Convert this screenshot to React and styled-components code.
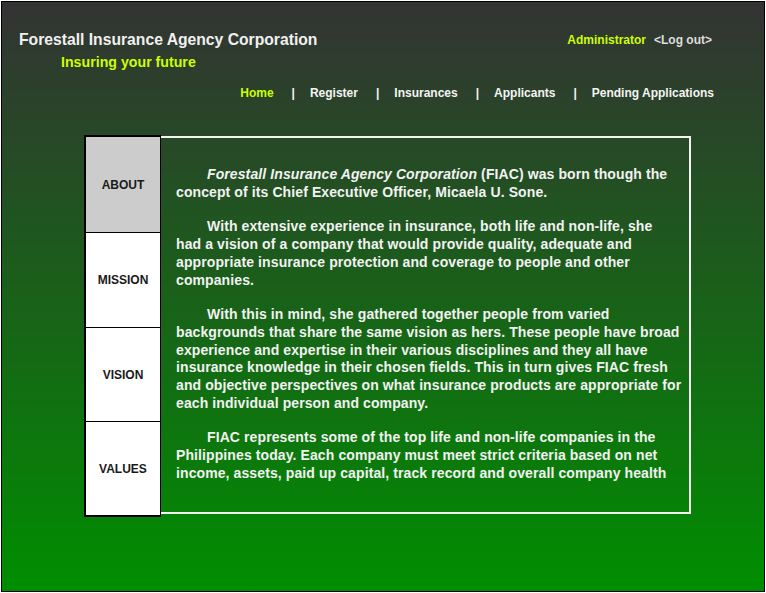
import React from "react";
import styled, { createGlobalStyle } from "styled-components";

const Global = createGlobalStyle`
  html, body { margin: 0; padding: 0; background: #fff; }
  body { font-family: "Liberation Sans", Arial, sans-serif; }
`;

const Frame = styled.div`
  margin: 1px;
  width: 762px;
  height: 589px;
  border: 1px solid #000;
  background: linear-gradient(to bottom, #333333 0%, #008e00 100%);
  display: flex;
  flex-direction: column;
  overflow: hidden;
`;

const Header = styled.div`
  display: flex;
  justify-content: space-between;
  align-items: flex-start;
  padding: 28px 52px 0 17px;
`;

const Brand = styled.div`
  display: flex;
  flex-direction: column;
`;

const Title = styled.div`
  color: #f0f0f0;
  font-size: 15.7px;
  font-weight: bold;
  line-height: 20px;
`;

const Tagline = styled.div`
  color: #ccff00;
  font-size: 14.2px;
  font-weight: bold;
  line-height: 18px;
  margin: 3px 0 0 42px;
`;

const User = styled.div`
  display: flex;
  gap: 8px;
  font-size: 12px;
  font-weight: bold;
  line-height: 16px;
  margin-top: 2px;
`;

const UserName = styled.span`
  color: #ccff00;
`;

const LogOut = styled.span`
  color: #dddddd;
`;

const Nav = styled.nav`
  display: flex;
  justify-content: flex-end;
  padding: 14px 50px 0 0;
  font-size: 12px;
  font-weight: bold;
  line-height: 16px;
`;

const NavLink = styled.span`
  color: ${(p) => (p.$active ? "#ccff00" : "#f4f4f4")};
`;

const Sep = styled.span`
  color: #f4f4f4;
  margin: 0 15px 0 18px;
`;

const Content = styled.div`
  display: flex;
  align-items: flex-start;
  margin: 34px 0 0 82px;
`;

const Tabs = styled.div`
  width: 74px;
  border: 2px solid #000;
  border-right-width: 1px;
  display: flex;
  flex-direction: column;
  flex-shrink: 0;
`;

const Tab = styled.div`
  height: ${(p) => p.$h}px;
  display: flex;
  align-items: center;
  justify-content: center;
  background: ${(p) => (p.$active ? "#cccccc" : "#ffffff")};
  color: #1a1a1a;
  font-size: 12px;
  font-weight: bold;
  border-top: ${(p) => (p.$first ? "none" : "1px solid #000")};
`;

const Panel = styled.div`
  width: 530px;
  height: 378px;
  margin-top: 1px;
  border: 2px solid #f4f4f4;
  border-left: none;
  padding: 28px 7.5px 0 15px;
  box-sizing: border-box;
`;

const Para = styled.p`
  margin: 0 0 17px;
  color: #f2f2f2;
  font-size: 14px;
  font-weight: bold;
  line-height: 17.7px;
  letter-spacing: 0.1px;
  text-indent: 31px;
`;

export default function App() {
  const tabs = [
    { label: "ABOUT", h: 95, active: true },
    { label: "MISSION", h: 94 },
    { label: "VISION", h: 93 },
    { label: "VALUES", h: 93 },
  ];
  const links = ["Home", "Register", "Insurances", "Applicants", "Pending Applications"];
  return (
    <>
      <Global />
      <Frame>
        <Header>
          <Brand>
            <Title>Forestall Insurance Agency Corporation</Title>
            <Tagline>Insuring your future</Tagline>
          </Brand>
          <User>
            <UserName>Administrator</UserName>
            <LogOut>&lt;Log out&gt;</LogOut>
          </User>
        </Header>
        <Nav>
          {links.map((l, i) => (
            <React.Fragment key={l}>
              {i > 0 && <Sep>|</Sep>}
              <NavLink $active={i === 0}>{l}</NavLink>
            </React.Fragment>
          ))}
        </Nav>
        <Content>
          <Tabs>
            {tabs.map((t, i) => (
              <Tab key={t.label} $h={t.h} $active={t.active} $first={i === 0}>
                {t.label}
              </Tab>
            ))}
          </Tabs>
          <Panel>
            <Para>
              <i>Forestall Insurance Agency Corporation</i> (FIAC) was born though the
              concept of its Chief Executive Officer, Micaela U. Sone.
            </Para>
            <Para>
              With extensive experience in insurance, both life and non-life, she had a
              vision of a company that would provide quality, adequate and appropriate
              insurance protection and coverage to people and other companies.
            </Para>
            <Para>
              With this in mind, she gathered together people from varied backgrounds
              that share the same vision as hers. These people have broad experience and
              expertise in their various disciplines and they all have insurance knowledge
              in their chosen fields. This in turn gives FIAC fresh and objective
              perspectives on what insurance products are appropriate for each individual
              person and company.
            </Para>
            <Para>
              FIAC represents some of the top life and non-life companies in the
              Philippines today. Each company must meet strict criteria based on net
              income, assets, paid up capital, track record and overall company health
            </Para>
          </Panel>
        </Content>
      </Frame>
    </>
  );
}
